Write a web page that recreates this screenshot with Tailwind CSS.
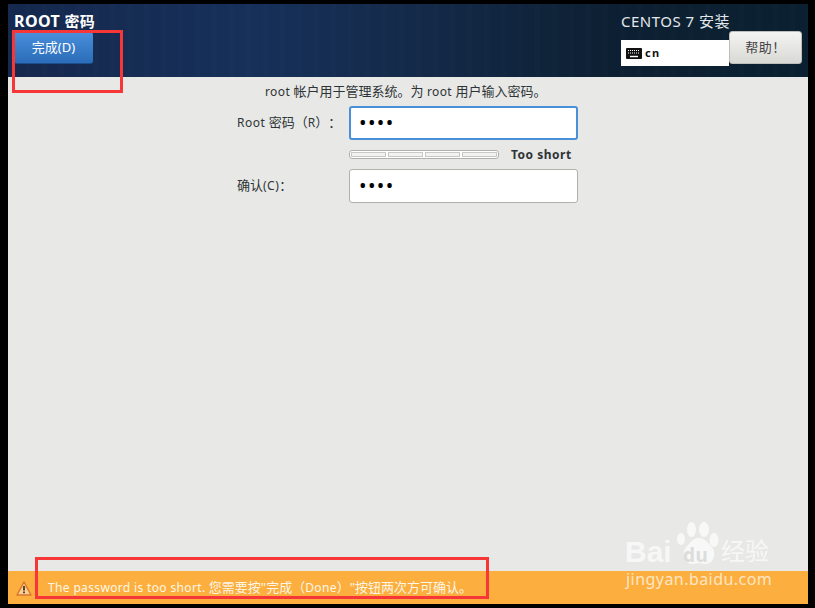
<!DOCTYPE html>
<html lang="zh">
<head>
    <meta charset="UTF-8">
    <title>ROOT 密码</title>
    <script src="https://cdn.jsdelivr.net/npm/@tailwindcss/browser@4"></script>
</head>
<body class="bg-black w-[815px] h-[608px] overflow-hidden relative font-['Noto_Sans','Noto_Sans_CJK_SC',sans-serif] [text-spacing-trim:space-all]">
    <div class="absolute left-2 top-1 w-[800px] h-[600px] flex flex-col bg-[#e8e8e6]">
        <!-- header -->
        <header class="h-[73px] shrink-0 flex justify-between bg-[repeating-linear-gradient(90deg,rgba(255,255,255,0.009)_0_5px,transparent_5px_17px),linear-gradient(90deg,#15284d_0%,#16305a_30%,#142a4a_50%,#0d2033_75%,#0a2030_100%)]">
            <div class="pl-[6px] pt-[7px]">
                <h1 class="text-[15px] leading-[20px] font-bold text-white tracking-[0.4px]"><span class="text-[16px]">ROOT</span> 密码</h1>
                <button class="mt-[1px] w-[79px] h-[32px] rounded-[3px] text-[13px] text-white bg-[linear-gradient(180deg,#4a90dc,#2a6cb8)] border-b border-[#1b4f8c]">完成(D)</button>
            </div>
            <div class="w-[187px] pt-[7px] relative">
                <div class="text-[15px] leading-[20px] text-[#e4e8ec] tracking-[0.5px]">CENTOS 7 安装</div>
                <div class="mt-[9px] w-[108px] h-[26px] bg-white flex items-center gap-[3px] pl-[5px]">
                    <svg width="16" height="11" viewBox="0 0 16 11" class="shrink-0">
                        <rect width="16" height="11" rx="1" fill="#111"/>
                        <path d="M2 2.5h12M2 5h12" stroke="#fff" stroke-width="1" stroke-dasharray="1 1"/>
                        <path d="M4 8.5h8" stroke="#fff" stroke-width="1.4"/>
                    </svg>
                    <span class="text-[11px] font-bold text-[#111] tracking-[1.2px]">cn</span>
                </div>
                <button class="absolute left-[108px] top-[27px] w-[73px] h-[33px] rounded-[3px] border border-[#bdbdb9] text-[13px] text-[#444] tracking-[0.5px] bg-[linear-gradient(180deg,#f4f4f2,#d8d8d5)]">帮助<span class="font-['Noto_Sans_CJK_TC']">！</span></button>
            </div>
        </header>

        <!-- form -->
        <main class="flex-1 relative">
            <p class="pt-[6px] pl-[257px] text-[13px] leading-[17px] text-[#2e3436]"><span class="text-[12px] tracking-[0.4px]">root</span> 帐户用于管理系统。为 <span class="text-[12px] tracking-[0.4px]">root</span> 用户输入密码。</p>
            <div class="mt-[6px] pl-[229px] flex items-center">
                <label class="w-[112px] text-[13px] text-[#2e3436] whitespace-nowrap"><span class="text-[12px] tracking-[0.5px]">Root</span> 密码（<span class="text-[12px]">R</span>）：</label>
                <div class="w-[229px] h-[34px] bg-white rounded-[3px] border-2 border-[#4a90d9] flex items-center pl-[8px] text-[20px] tracking-[1.4px] text-black">••••</div>
            </div>
            <div class="mt-[10px] h-[9px] pl-[341px] flex items-center">
                <div class="w-[150px] h-[9px] rounded-[3px] border border-[#b0b0ac] bg-white flex gap-[2px] p-[1px]">
                    <span class="flex-1 border border-[#c8c8c4] bg-[#f2f2f0]"></span>
                    <span class="flex-1 border border-[#c8c8c4] bg-[#f2f2f0]"></span>
                    <span class="flex-1 border border-[#c8c8c4] bg-[#f2f2f0]"></span>
                    <span class="flex-1 border border-[#c8c8c4] bg-[#f2f2f0]"></span>
                </div>
                <span class="ml-[12px] text-[12px] font-bold text-[#2e3436] tracking-[0.5px]">Too short</span>
            </div>
            <div class="mt-[10px] pl-[229px] flex items-center">
                <label class="w-[112px] text-[13px] text-[#2e3436]">确认<span class="text-[12px] tracking-[0.5px]">(C)</span>：</label>
                <div class="w-[229px] h-[34px] bg-white rounded-[3px] border border-[#b0b0ac] flex items-center pl-[9px] text-[20px] tracking-[1.4px] text-black">••••</div>
            </div>
        </main>

        <!-- warning bar -->
        <footer class="h-[33px] shrink-0 bg-[#fcaf3e] flex items-center pl-[8px] pt-[1px]">
            <svg width="16" height="15" viewBox="0 0 16 15" class="shrink-0">
                <path d="M8 1 15 14H1Z" fill="#f8cf96" stroke="#d9772a" stroke-width="1.5" stroke-linejoin="round"/>
                <path d="M8 5v4.5M8 10.5v1.8" stroke="#3a2208" stroke-width="1.6"/>
            </svg>
            <span class="ml-[16px] text-[13px] text-[#fff6e6] whitespace-nowrap"><span class="text-[12px] tracking-[0.35px]">The password is too short.</span> 您需要按"完成（<span class="text-[12px] tracking-[0.35px]">Done</span>）"按钮两次方可确认。</span>
        </footer>
    </div>

    <!-- annotation boxes -->
    <div class="absolute left-[12px] top-[30px] w-[111px] h-[63px] border-[3px] border-[#f73737]"></div>
    <div class="absolute left-[35px] top-[557px] w-[454px] h-[42px] border-[3px] border-[#f73737]"></div>

    <!-- watermark -->
    <div class="absolute left-[625px] top-[519px] w-[150px] h-[72px] text-white/70">
        <svg width="44" height="48" viewBox="0 0 44 48" class="absolute left-[50px] top-0" fill="currentColor">
            <ellipse cx="16.5" cy="10.5" rx="4.5" ry="7.5"/>
            <ellipse cx="29" cy="10.5" rx="5" ry="7.5"/>
            <ellipse cx="6" cy="20" rx="4" ry="6"/>
            <ellipse cx="39" cy="21" rx="4.5" ry="7"/>
            <path d="M24 19c6 0 9 5 12 8 5 4 5 18-6 18-3 0-4-1-6-1s-3 1-6 1c-11 0-11-14-6-18 3-3 6-8 12-8Z"/>
        </svg>
        <span class="absolute left-[0px] top-[16px] text-[30px] leading-[34px] font-bold font-['Liberation_Sans',sans-serif]">Bai</span>
        <span class="absolute left-[58px] top-[26px] text-[19px] leading-[20px] font-bold text-[#dcdcd9] tracking-[0.5px]">du</span>
        <span class="absolute left-[96px] top-[17px] text-[24px] leading-[30px]">经验</span>
        <span class="absolute left-[1px] top-[50px] text-[16px] leading-[20px] tracking-[0.45px]">jingyan.baidu.com</span>
    </div>
</body>
</html>
